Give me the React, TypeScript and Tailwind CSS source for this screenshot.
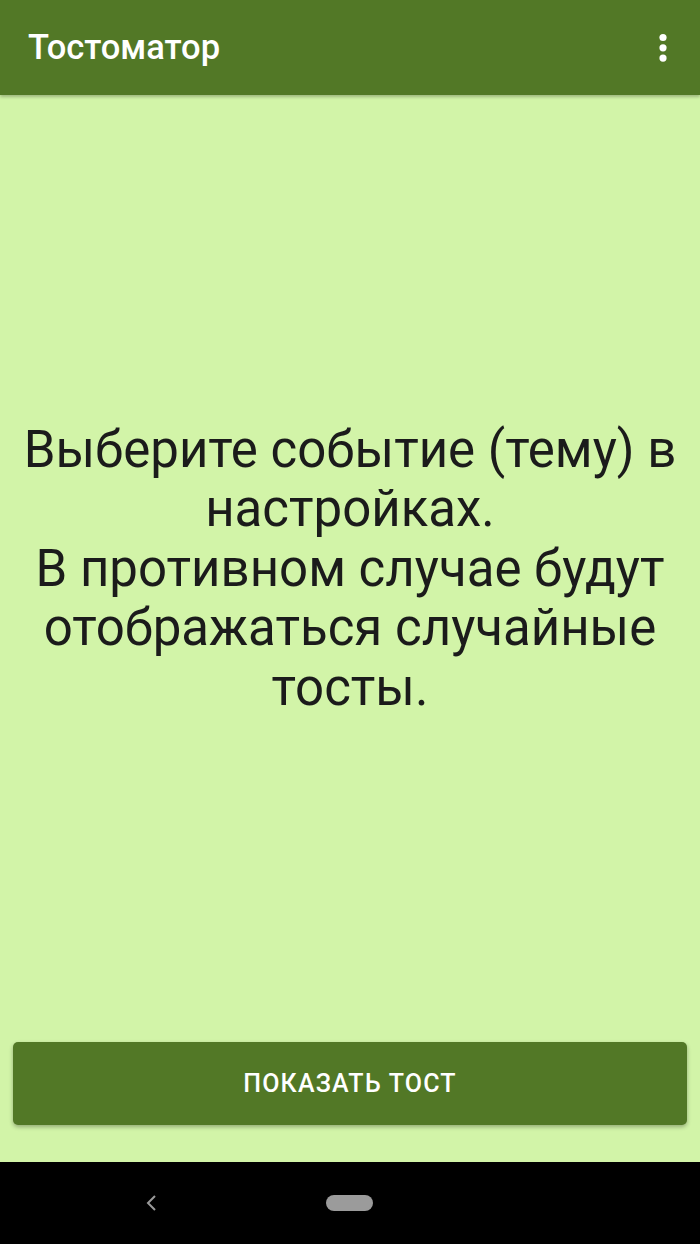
export default function App() {
  return (
    <div
      className="flex h-[1244px] w-[700px] flex-col bg-[#d2f4a8]"
      style={{ fontFamily: 'Roboto, "Noto Sans", sans-serif' }}
    >
      {/* app bar */}
      <header className="flex h-[95px] shrink-0 items-center justify-between pl-[28px] pr-[33px] bg-[#527826] shadow-[0_2px_3px_rgba(0,0,0,0.25)]">
        <h1 className="text-[34.5px] font-medium leading-none text-white">Тостоматор</h1>
        <svg width="8" height="30" viewBox="0 0 8 30" fill="#fff">
          <circle cx="4" cy="4.5" r="3.6" />
          <circle cx="4" cy="14.8" r="3.6" />
          <circle cx="4" cy="25.1" r="3.6" />
        </svg>
      </header>

      {/* message */}
      <main className="flex flex-1 items-center justify-center px-3">
        <p className="text-center text-[51px] leading-[59.5px] text-[#1b1b1b]">
          Выберите событие (тему) в настройках.
          <br />
          В противном случае будут отображаться случайные тосты.
        </p>
      </main>

      {/* button */}
      <div className="shrink-0 px-[13px] pb-[37px]">
        <button className="flex h-[83px] w-full items-center justify-center rounded-[5px] bg-[#527826] text-[25px] font-medium tracking-[1.2px] text-white shadow-[0_2px_4px_rgba(0,0,0,0.3)]">
          ПОКАЗАТЬ ТОСТ
        </button>
      </div>

      {/* system nav bar */}
      <nav className="flex h-[82px] shrink-0 items-center bg-black">
        <svg className="ml-[144px]" width="14" height="20" viewBox="0 0 14 20" fill="none">
          <path d="M11 3 L4 10 L11 17" stroke="#9a9a9a" strokeWidth="2" />
        </svg>
        <div className="ml-[168px] h-[16px] w-[47px] rounded-full bg-[#9b9b9b]" />
      </nav>
    </div>
  );
}
